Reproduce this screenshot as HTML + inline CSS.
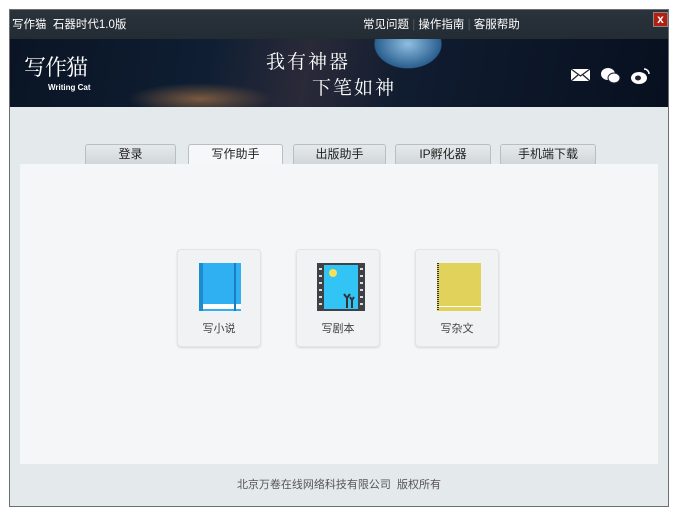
<!DOCTYPE html>
<html><head><meta charset="utf-8"><style>
*{margin:0;padding:0;box-sizing:border-box}
body{width:690px;height:511px;background:#fff;font-family:"Liberation Sans","Noto Sans CJK SC",sans-serif;position:relative;overflow:hidden}
.win{position:absolute;left:9px;top:9px;width:660px;height:498px;background:#e4e9ec;border:1px solid #6a6f74}
.title{position:absolute;left:0;top:0;width:658px;height:29px;background:linear-gradient(#2a333c,#232b33);color:#fff;font-size:12px}
.banner{position:absolute;left:0;top:29px;width:658px;height:68px;background:radial-gradient(ellipse 55px 40px at 398px 5px,#8fbfe0,#2a5f8f 60%,transparent 62%),radial-gradient(ellipse 380px 40px at 600px 95px,#6d8fb3,#2f4d70 50%,transparent 70%),radial-gradient(ellipse 90px 20px at 190px 60px,#7a5a40,transparent 80%),linear-gradient(100deg,#0a1424 0%,#0f1e33 30%,#2a2a38 45%,#101c30 60%,#07101f 100%)}
.tab{position:absolute;top:134px;height:20px;border:1px solid #b8bec3;border-bottom:none;border-radius:3px 3px 0 0;background:linear-gradient(#e6eaec,#d0d6da);font-size:12px;text-align:center;line-height:19px;color:#222}
.tab.on{background:#f6f7f8;height:21px}
.content{position:absolute;left:10px;top:154px;width:638px;height:300px;background:#f4f6f7}
.card{position:absolute;top:85px;width:84px;height:98px;background:#f1f2f3;border:1px solid #e2e4e6;border-radius:4px;box-shadow:0 1px 2px rgba(0,0,0,.12);font-size:11px;color:#444;text-align:center}
.card span{position:absolute;left:0;right:0;top:70px}
.card svg{position:absolute;left:20px;top:12px}
</style></head><body>
<div class="win">
 <div class="title">
  <div style="position:absolute;left:2px;top:6px;font-size:11.5px">写作猫&nbsp; 石器时代1.0版</div>
  <div style="position:absolute;left:353px;top:6px;font-size:11.5px">常见问题&nbsp;<span style="color:#555">|</span>&nbsp;操作指南&nbsp;<span style="color:#555">|</span>&nbsp;客服帮助</div>
  <div style="position:absolute;left:643px;top:2px;width:15px;height:15px;background:#b21e10;border:1px solid #888;color:#fff;font-size:12px;font-weight:bold;text-align:center;line-height:13px">x</div>
 </div>
 <div class="banner">
  <div style="position:absolute;left:14px;top:12px;color:#fff;font-size:22px;font-family:'Noto Serif CJK SC',serif;letter-spacing:-1px">写作猫</div>
  <div style="position:absolute;left:38px;top:44px;color:#fff;font-size:8px;font-weight:bold">Writing Cat</div>
  <div style="position:absolute;left:256px;top:8px;color:#fff;font-size:19px;font-family:'Noto Serif CJK SC',serif;letter-spacing:2px">我有神器</div>
  <div style="position:absolute;left:302px;top:34px;color:#fff;font-size:19px;font-family:'Noto Serif CJK SC',serif;letter-spacing:2px">下笔如神</div>
  <svg style="position:absolute;left:560px;top:26px" width="90" height="20"><rect x="1" y="4" width="19" height="12" fill="#fff"/><path d="M1 4l9.5 7 9.5-7M1 16l7-6M20 16l-7-6" stroke="#223" fill="none" stroke-width="1.3"/><ellipse cx="38" cy="9" rx="7" ry="6" fill="#fff"/><ellipse cx="44" cy="13" rx="6" ry="5" fill="#fff" stroke="#223"/><ellipse cx="69" cy="13" rx="8" ry="6" fill="#fff"/><ellipse cx="68" cy="13" rx="3" ry="2.5" fill="#223"/><path d="M74 4a5 5 0 0 1 5 5" stroke="#fff" stroke-width="1.5" fill="none"/></svg>
 </div>
 <div class="tab" style="left:75px;width:91px">登录</div>
 <div class="tab on" style="left:178px;width:95px">写作助手</div>
 <div class="tab" style="left:283px;width:93px">出版助手</div>
 <div class="tab" style="left:385px;width:96px">IP孵化器</div>
 <div class="tab" style="left:490px;width:96px">手机端下载</div>
 <div class="content">
  <div class="card" style="left:157px"><svg width="44" height="50"><rect x="1" y="1" width="42" height="48" fill="#2fb0f2"/><rect x="1" y="1" width="4" height="48" fill="#1d8cce"/><rect x="5" y="42" width="38" height="5" fill="#fff"/><rect x="36" y="1" width="2" height="48" fill="#1d7fc0"/></svg><span>写小说</span></div>
  <div class="card" style="left:276px"><svg width="48" height="50"><rect x="0" y="1" width="48" height="48" fill="#3e4246"/><rect x="7" y="3" width="34" height="44" fill="#32c4f4"/><circle cx="16" cy="11" r="4" fill="#f5e05a"/><path d="M30 46v-10l-3-4M30 36l3-4M35 46v-8l-2-3M35 38l2-3" stroke="#333" stroke-width="2" fill="none"/><g fill="#ddd"><rect x="2" y="6" width="3" height="2"/><rect x="2" y="13" width="3" height="2"/><rect x="2" y="20" width="3" height="2"/><rect x="2" y="27" width="3" height="2"/><rect x="2" y="34" width="3" height="2"/><rect x="2" y="41" width="3" height="2"/><rect x="43" y="6" width="3" height="2"/><rect x="43" y="13" width="3" height="2"/><rect x="43" y="20" width="3" height="2"/><rect x="43" y="27" width="3" height="2"/><rect x="43" y="34" width="3" height="2"/><rect x="43" y="41" width="3" height="2"/></g></svg><span>写剧本</span></div>
  <div class="card" style="left:395px"><svg width="46" height="50"><rect x="1" y="1" width="44" height="48" fill="#e0d25a"/><path d="M2 1v48" stroke="#333" stroke-width="2" stroke-dasharray="1 1"/><rect x="2" y="44" width="43" height="1" fill="#fff"/></svg><span>写杂文</span></div>
 </div>
 <div style="position:absolute;left:0;width:658px;top:466px;text-align:center;font-size:11px;color:#555">北京万卷在线网络科技有限公司&nbsp; 版权所有</div>
</div>
</body></html>
